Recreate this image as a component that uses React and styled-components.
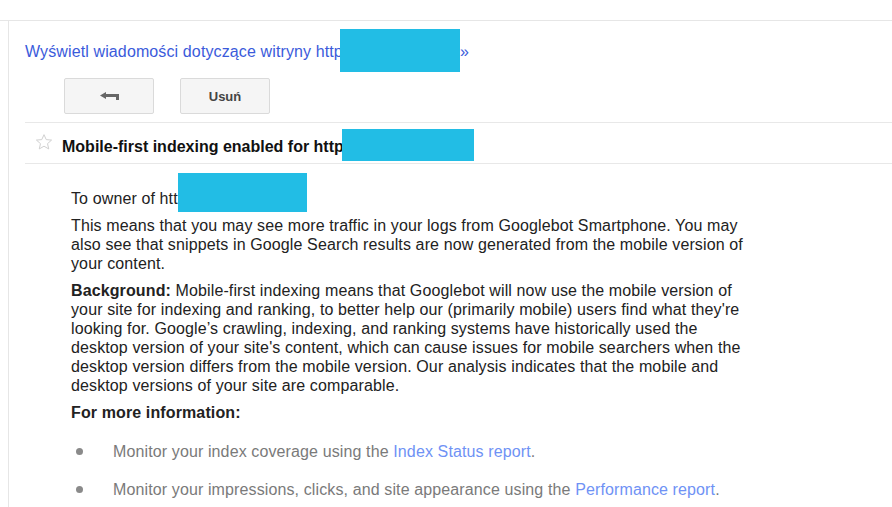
import React from 'react'
import styled, { createGlobalStyle } from 'styled-components'

const GlobalStyle = createGlobalStyle`
  html, body {
    margin: 0;
    padding: 0;
    background: #fff;
  }
  body {
    font-family: "Liberation Sans", Arial, sans-serif;
    color: #222;
  }
`

export default function App() {
  return (
    <>
      <GlobalStyle />
      <Page>
        <TopBar />
        <Main>
          <SiteLink href="#">
            Wyświetl wiadomości dotyczące witryny http
            <Redaction $w={120} $up={13} $down={11} $shift={-3} />
            »
          </SiteLink>

          <Toolbar>
            <ToolButton aria-label="Wstecz">
              <svg width="19" height="8" viewBox="0 0 19 8">
                <path d="M0 3.5 L6 0 V2 H19 V8 H16 V5 H6 V7 Z" fill="#666" />
              </svg>
            </ToolButton>
            <ToolButton>Usuń</ToolButton>
          </Toolbar>

          <SubjectRow>
            <Star width="18" height="18" viewBox="0 0 24 24">
              <path
                d="M12 2.2l2.95 6.6 7.15.65-5.4 4.75 1.6 7.05L12 17.55 5.7 21.25l1.6-7.05-5.4-4.75 7.15-.65z"
                fill="none"
                stroke="#cfcfcf"
                strokeWidth="1.3"
                strokeLinejoin="round"
              />
            </Star>
            <Subject>
              Mobile-first indexing enabled for http
              <Redaction $w={132} $up={8} $down={5} $shift={-2} />
            </Subject>
          </SubjectRow>

          <Message>
            <Para>
              To owner of htt
              <Redaction $w={129} $up={16} $down={4} $shift={0} />
            </Para>
            <Para>
              This means that you may see more traffic in your logs from Googlebot Smartphone. You may
              also see that snippets in Google Search results are now generated from the mobile version of
              your content.
            </Para>
            <Para>
              <b>Background:</b> Mobile-first indexing means that Googlebot will now use the mobile version of
              your site for indexing and ranking, to better help our (primarily mobile) users find what they're
              looking for. Google’s crawling, indexing, and ranking systems have historically used the
              desktop version of your site's content, which can cause issues for mobile searchers when the
              desktop version differs from the mobile version. Our analysis indicates that the mobile and
              desktop versions of your site are comparable.
            </Para>
            <Para>
              <b>For more information:</b>
            </Para>
            <InfoList>
              <InfoItem>
                <Dot />
                <span>
                  Monitor your index coverage using the <InfoLink href="#">Index Status report</InfoLink>.
                </span>
              </InfoItem>
              <InfoItem>
                <Dot />
                <span>
                  Monitor your impressions, clicks, and site appearance using the{' '}
                  <InfoLink href="#">Performance report</InfoLink>.
                </span>
              </InfoItem>
            </InfoList>
          </Message>
        </Main>
      </Page>
    </>
  )
}

const Page = styled.div`
  height: 507px;
  display: flex;
  flex-direction: column;
  overflow: hidden;
`

const TopBar = styled.div`
  height: 20px;
  flex: none;
  border-bottom: 1px solid #e6e6e6;
`

const Main = styled.main`
  flex: 1;
  margin-left: 8px;
  border-left: 1px solid #e6e6e6;
  padding: 21px 0 0 16px;
`

const Redaction = styled.span`
  position: relative;
  display: inline-block;
  width: ${p => p.$w}px;
  height: 19px;
  margin-left: ${p => p.$shift || 0}px;
  vertical-align: top;

  &::before {
    content: '';
    position: absolute;
    left: 0;
    right: 0;
    top: ${p => -p.$up}px;
    bottom: ${p => -p.$down}px;
    background: #22bde5;
  }
`

const SiteLink = styled.a`
  display: block;
  font-size: 16px;
  line-height: 19px;
  letter-spacing: 0.12px;
  color: #3b5bdb;
  text-decoration: none;
  white-space: nowrap;
`

const Toolbar = styled.div`
  display: flex;
  gap: 26px;
  margin-top: 17px;
  padding-left: 39px;
`

const ToolButton = styled.button`
  box-sizing: border-box;
  width: 90px;
  height: 36px;
  display: flex;
  align-items: center;
  justify-content: center;
  padding: 0;
  background: #f5f5f5;
  border: 1px solid #dadada;
  border-radius: 2px;
  font-family: "Liberation Sans", Arial, sans-serif;
  font-size: 13px;
  font-weight: bold;
  color: #444;
`

const SubjectRow = styled.div`
  display: flex;
  align-items: flex-start;
  gap: 9px;
  margin-top: 8px;
  padding: 14px 0 7px 10px;
  border-top: 1px solid #e8e8e8;
  border-bottom: 1px solid #e8e8e8;
`

const Star = styled.svg`
  flex: none;
  margin-top: -4px;
`

const Subject = styled.h2`
  margin: 0;
  font-size: 16px;
  line-height: 19px;
  font-weight: bold;
  color: #111;
  white-space: nowrap;
`

const Message = styled.div`
  width: 680px;
  padding: 25px 0 0 46px;
  font-size: 16px;
  line-height: 19px;
  letter-spacing: 0.12px;
  color: #222;
`

const Para = styled.p`
  margin: 0 0 8px;
`

const InfoList = styled.ul`
  list-style: none;
  margin: 20px 0 0;
  padding: 0;
  display: flex;
  flex-direction: column;
  gap: 19px;
`

const InfoItem = styled.li`
  display: flex;
  align-items: center;
  color: #7a7a7a;
  white-space: nowrap;
`

const Dot = styled.span`
  flex: none;
  width: 7px;
  height: 7px;
  margin: 0 30px 0 5px;
  border-radius: 50%;
  background: #8a8a8a;
`

const InfoLink = styled.a`
  color: #6f92f5;
  text-decoration: none;
`
